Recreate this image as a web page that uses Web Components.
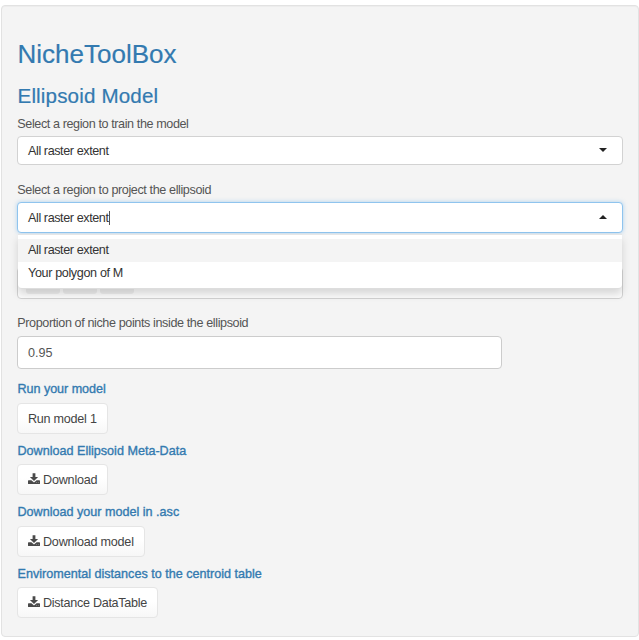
<!DOCTYPE html>
<html lang="en">
<head>
<meta charset="utf-8">
<title>NicheToolBox</title>
<style>
html,body{margin:0;background:#fff}
body{font:12.6px/18px "Liberation Sans",Arial,sans-serif;color:#555;padding:5px 0 0 1px}
</style>
</head>
<body>
<model-panel></model-panel>
<script>
function define(name, html) {
  customElements.define(name, class extends HTMLElement {
    constructor() {
      super();
      this.attachShadow({mode: 'open'}).innerHTML = html;
    }
  });
}

define('panel-heading', `<style>
:host{display:block;color:#337ab0;font-size:26px;line-height:30px;padding-left:.5px;letter-spacing:var(--ls,0);-webkit-text-stroke:.2px #337ab0}
:host([level="2"]){font-size:20.6px;line-height:24px}
:host([level="3"]){font-size:12.6px;line-height:18px;-webkit-text-stroke:.35px #337ab0}
</style><slot></slot>`);

define('field-label', `<style>
:host{display:block;height:18px;white-space:nowrap;padding-left:.3px;letter-spacing:var(--ls,0)}
</style><slot></slot>`);

define('select-box', `<style>
:host{display:flex;align-items:center;justify-content:space-between;box-sizing:border-box;height:29px;
background:#fff;border:1px solid #d2d2d2;border-radius:4px;padding:0 15px 0 10px;color:#333;position:relative;letter-spacing:-.41px}
:host([open]){height:31px;border-color:#8fc4ee;box-shadow:0 0 4px rgba(102,175,233,.5)}
.v{display:flex;align-items:center}
.c{display:none;width:1px;height:14px;background:#555}
:host([open]) .c{display:block}
svg{width:8px;height:4px;display:block;margin-top:-2px}
:host([open]) svg{transform:scaleY(-1)}
</style><span class="v"><slot></slot><i class="c"></i></span>
<svg viewBox="0 0 8 4"><path d="M0 0h8L4 4z" fill="#222"/></svg>
<slot name="menu"></slot>`);

define('option-menu', `<style>
:host{position:absolute;z-index:2;left:0;right:0;top:31px;height:55px;box-sizing:border-box;padding-top:4px;
background:#fff;border:solid #ddd;border-top-color:#e6e6e6;border-radius:0 0 4px 4px;box-shadow:0 5px 9px rgba(0,0,0,.15);border-width:1px 0}
</style><slot></slot>`);

define('menu-option', `<style>
:host{display:block;line-height:22.6px;height:22.6px;padding-left:10px;letter-spacing:var(--ls,-.41px)}
:host([active]){background:#f4f4f4}
</style><slot></slot>`);

define('tag-box', `<style>
:host{display:flex;align-items:flex-end;gap:3px;box-sizing:border-box;height:32px;padding:0 8px 4px;
background:#fcfcfc;border:1px solid #d2d2d2;border-radius:4px}
i{width:34px;height:22px;background:#eee;border-radius:3px}
</style><i></i><i></i><i></i>`);

define('number-field', `<style>
:host{display:flex;align-items:center;box-sizing:border-box;width:485px;height:33px;padding:0 10px;
background:#fff;border:1px solid #ccc;border-radius:4px}
</style><slot></slot>`);

define('action-button', `<style>
:host{display:flex;align-items:center;box-sizing:border-box;width:var(--w);height:31px;padding:0 0 0 10px;color:#444;
background:linear-gradient(#fff 45%,#f7f7f7);border:1px solid #e5e5e5;border-radius:4px;white-space:nowrap;letter-spacing:var(--ls,0)}
:host([icon]){padding-top:1px}
svg{display:none;width:12px;height:12px;margin:-2px 3px 0 0}
:host([icon]) svg{display:block}
</style><svg viewBox="0 0 12 12"><path fill="#4a4a4a" d="M4.600 .3h2.800v3.700h2.700L6 8 1.900 4h2.700zM.6 7.300h2.800L6 9.500l2.600-2.200h2.800q.6 0 .6.6v2.500q0 .6-.6.6H.6q-.6 0-.6-.6V7.900q0-.6.600-.6z"/><path fill="#999" d="M8 9.300h.8v.8H8zM9.900 9.300h.8v.8h-.8z"/></svg><slot></slot>`);

define('model-panel', `<style>
:host{display:block;box-sizing:border-box;width:638px;height:632px;background:#f4f4f4;border:1px solid #e2e2e2;border-radius:4px;
padding:33px 15px 0 15px;box-shadow:inset 0 1px 1px rgba(0,0,0,.03)}
</style>
<panel-heading style="--ls:0px">NicheToolBox</panel-heading>
<panel-heading level="2" style="margin-top:15px;--ls:.15px">Ellipsoid Model</panel-heading>
<field-label style="margin-top:7px;--ls:-.4px">Select a region to train the model</field-label>
<select-box style="margin-top:3px">All raster extent</select-box>
<field-label style="margin-top:16px;--ls:-.39px">Select a region to project the ellipsoid</field-label>
<select-box open style="margin-top:3px">All raster extent
<option-menu slot="menu"><menu-option active>All raster extent</menu-option><menu-option style="--ls:-.36px">Your polygon of M</menu-option></option-menu></select-box>
<tag-box style="margin-top:34px"></tag-box>
<field-label style="margin-top:15px;--ls:-.39px">Proportion of niche points inside the ellipsoid</field-label>
<number-field style="margin-top:4px">0.95</number-field>
<panel-heading level="3" style="margin-top:11px;--ls:-.05px">Run your model</panel-heading>
<action-button style="margin-top:5px;--w:91px;--ls:-.25px">Run model 1</action-button>
<panel-heading level="3" style="margin-top:8px">Download Ellipsoid Meta-Data</panel-heading>
<action-button icon style="margin-top:4px;--w:91px;--ls:-.2px">Download</action-button>
<panel-heading level="3" style="margin-top:8px">Download your model in .asc</panel-heading>
<action-button icon style="margin-top:5px;--w:128px;--ls:-.22px">Download model</action-button>
<panel-heading level="3" style="margin-top:8px">Enviromental distances to the centroid table</panel-heading>
<action-button icon style="margin-top:4px;--w:141px;--ls:-.29px">Distance DataTable</action-button>`);
</script>
</body>
</html>
